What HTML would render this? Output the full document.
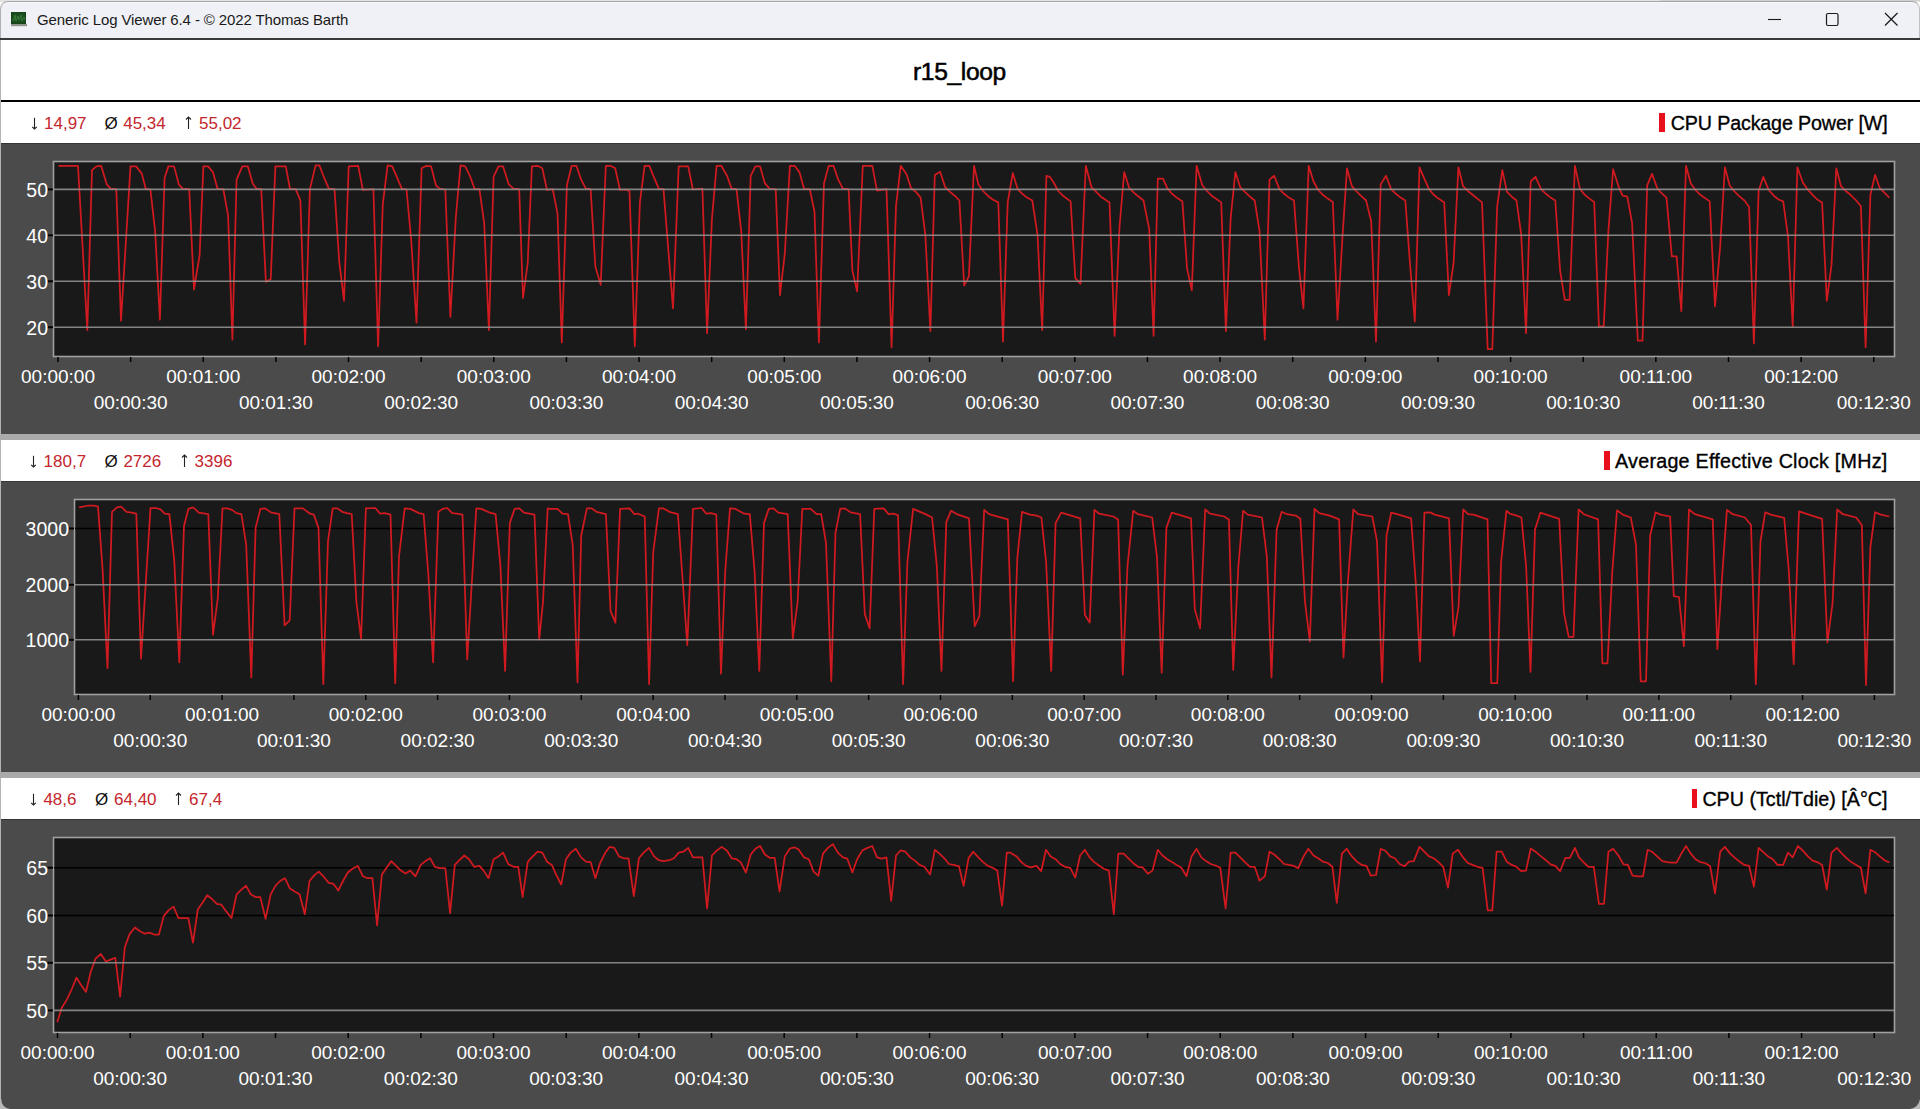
<!DOCTYPE html><html><head><meta charset="utf-8"><style>
*{margin:0;padding:0;box-sizing:border-box}
html,body{width:1920px;height:1109px;overflow:hidden;background:#fff;font-family:"Liberation Sans",sans-serif}
.a{position:absolute}
.t{position:absolute;white-space:nowrap;line-height:1}
.xl{position:absolute;white-space:nowrap;line-height:1;color:#fff;font-size:19px;transform:translateX(-50%)}
.yl{position:absolute;white-space:nowrap;line-height:1;color:#fff;font-size:19.5px;text-align:right;width:60px}
.st{position:absolute;white-space:nowrap;line-height:1;color:#c4262d;font-size:17px}
.lg{position:absolute;white-space:nowrap;line-height:1;color:#000;font-size:19.7px;right:32.5px;-webkit-text-stroke:0.35px #000}
</style></head><body>
<div class="a" style="left:0;top:0;width:1920px;height:2px;background:#e2e2e2"></div>
<div class="a" style="left:1660px;top:0;width:260px;height:1px;background:#d0d0d0"></div>
<div class="a" style="left:0;top:1px;width:1920px;height:38px;background:#eff1f6;border-top:1px solid #a6a6a6;border-left:1px solid #b0b0b0;border-right:1px solid #c0c0c0;border-radius:8px 8px 0 0;box-shadow:inset 0 1px 0 #f8f8fc"></div>
<div class="a" style="left:0;top:38px;width:1920px;height:2px;background:#3a3a3a"></div>
<svg class="a" style="left:10px;top:11px" width="19" height="17" viewBox="0 0 19 17">
<rect x="1" y="1" width="15" height="12" fill="#123a16"/>
<rect x="1.5" y="1.5" width="14" height="11" fill="#1a4d1e"/>
<rect x="1" y="13" width="16" height="2.2" fill="#8e948e"/>
<polyline points="2,9 4,9 5,4 6,10 8,5 9,9 11,4 12,10 14,6 15,9" fill="none" stroke="#3f8a44" stroke-width="0.7"/>
</svg>
<div class="t" style="left:37px;top:12px;font-size:15px;color:#1a1a1a;letter-spacing:-0.12px">Generic Log Viewer 6.4 - © 2022 Thomas Barth</div>
<svg class="a" style="left:1760px;top:8px" width="150" height="24" viewBox="0 0 150 24">
<line x1="8" y1="11.5" x2="21" y2="11.5" stroke="#1a1a1a" stroke-width="1.1"/>
<rect x="66.5" y="5.5" width="11.5" height="12" rx="1.5" fill="none" stroke="#1a1a1a" stroke-width="1.2"/>
<line x1="125" y1="5" x2="137.5" y2="17.5" stroke="#1a1a1a" stroke-width="1.2"/>
<line x1="137.5" y1="5" x2="125" y2="17.5" stroke="#1a1a1a" stroke-width="1.2"/>
</svg>
<div class="a" style="left:0;top:40px;width:1px;height:1069px;background:#b4b4b4"></div>
<div class="t" style="left:913px;top:59.5px;font-size:24.6px;color:#000;-webkit-text-stroke:0.55px #000;letter-spacing:-0.35px">r15_loop</div>
<div class="a" style="left:1px;top:100px;width:1919px;height:2px;background:#000"></div>
<div class="a" style="left:1px;top:143px;width:1919px;height:291px;background:#4b4b4b;border-top:1px solid #363636"></div>
<div class="a" style="left:0;top:434px;width:1920px;height:6px;background:#aaaaaa"></div>
<svg class="a" style="left:30.5px;top:116px" width="7" height="14" viewBox="0 0 7 14"><line x1="3.5" y1="1.8" x2="3.5" y2="13" stroke="#222" stroke-width="1.1"/><polyline points="1.2,10.8 3.5,13 5.8,10.8" fill="none" stroke="#222" stroke-width="1.1"/></svg>
<div class="st" style="left:44px;top:115px">14,97</div>
<div class="t" style="left:104.5px;top:115px;font-size:17px;color:#111">Ø</div>
<div class="st" style="left:123.2px;top:115px">45,34</div>
<svg class="a" style="left:185px;top:116px" width="7" height="13" viewBox="0 0 7 13"><line x1="3.5" y1="1" x2="3.5" y2="13" stroke="#222" stroke-width="1.1"/><polyline points="1,3.5 3.5,1 6,3.5" fill="none" stroke="#222" stroke-width="1.1"/></svg>
<div class="st" style="left:199px;top:115px">55,02</div>
<div class="a" style="left:1659px;top:113px;width:5.5px;height:18.5px;background:#e8101a"></div>
<div class="lg" style="top:114px;letter-spacing:-0.15px">CPU Package Power [W]</div>
<svg class="a" style="left:0;top:143px" width="1920" height="291" viewBox="0 143 1920 291"><rect x="53.5" y="161.5" width="1841" height="195" fill="#191919" stroke="#a0a0a0" stroke-width="1.6"/><line x1="47.5" y1="189.4" x2="53" y2="189.4" stroke="#000" stroke-width="2"/><line x1="47.5" y1="235.3" x2="53" y2="235.3" stroke="#000" stroke-width="2"/><line x1="47.5" y1="281.3" x2="53" y2="281.3" stroke="#000" stroke-width="2"/><line x1="47.5" y1="327.2" x2="53" y2="327.2" stroke="#000" stroke-width="2"/><polyline points="58.5,165.8 78.0,165.8 87.3,330.2 92.0,170.2 96.4,166.4 101.1,165.8 106.8,184.4 110.6,188.7 116.3,189.1 121.0,320.8 130.5,166.4 136.2,166.4 141.9,173.9 145.7,188.7 150.4,189.5 155.1,230.8 159.9,319.8 164.6,177.7 168.4,166.4 174.1,166.4 178.8,184.4 182.6,188.7 189.2,189.1 194.0,289.5 199.6,255.4 203.4,166.4 208.2,166.4 212.9,172.1 217.6,189.1 223.3,189.1 228.1,215.6 232.4,339.7 236.6,179.6 242.3,166.4 247.9,166.4 252.7,183.4 256.5,188.7 261.2,189.1 265.9,281.9 270.7,279.1 275.4,166.4 285.8,166.4 290.0,189.1 295.7,189.1 300.4,200.5 305.1,344.4 309.9,189.1 315.6,165.4 319.4,165.4 324.1,177.7 328.8,188.7 334.5,189.1 339.2,261.1 344.0,300.9 348.7,166.4 358.2,165.8 362.9,190.0 373.4,189.1 378.1,346.3 382.8,204.2 387.6,165.4 392.3,166.4 401.8,188.7 406.5,189.5 411.2,240.2 416.5,322.6 421.6,168.3 426.4,165.8 431.1,166.4 435.9,185.3 439.6,188.7 445.3,189.5 450.4,317.0 455.8,217.5 460.5,165.4 465.2,166.4 469.9,175.8 474.7,189.1 479.4,189.1 484.2,223.2 488.9,330.2 493.6,176.8 498.4,166.4 503.1,166.4 508.8,184.4 513.5,188.7 519.2,189.1 523.0,298.0 527.7,263.0 531.9,166.4 537.6,165.8 542.3,168.3 547.0,190.0 552.7,189.1 557.5,213.7 561.8,342.5 566.9,185.3 571.7,165.8 576.4,165.8 581.1,179.6 585.9,188.7 590.6,189.1 595.4,266.8 600.7,284.8 605.8,165.8 610.5,165.8 615.2,168.3 620.0,190.0 624.7,189.5 629.5,191.0 634.8,346.3 639.9,202.4 644.6,165.8 649.3,165.8 654.1,177.7 658.8,188.7 663.5,189.1 673.0,308.4 678.7,166.4 688.2,166.4 692.9,189.5 702.4,188.7 707.1,333.1 711.9,219.4 716.6,165.8 721.3,165.8 727.0,175.8 731.7,188.7 736.5,189.1 741.2,230.8 745.9,329.3 750.7,175.8 755.4,166.4 760.1,166.4 764.9,183.4 770.0,189.1 775.7,189.1 780.0,295.2 784.8,253.5 789.9,165.8 794.6,165.8 799.4,172.1 804.1,189.1 809.8,189.1 814.5,211.8 818.9,342.5 824.0,183.4 828.7,165.8 833.5,165.8 838.2,179.6 842.9,188.7 848.6,189.1 852.4,270.6 857.1,291.4 862.8,165.8 872.3,165.8 877.0,190.6 886.5,189.1 891.6,347.3 896.0,206.1 900.7,165.8 906.4,173.9 911.1,188.2 915.9,191.9 920.6,197.6 925.3,234.6 930.4,331.2 934.8,174.9 940.1,171.7 945.2,187.2 950.0,191.9 954.7,195.7 959.4,200.5 964.2,285.7 968.9,276.2 974.0,165.8 978.4,184.4 983.1,191.0 987.8,195.7 992.6,199.5 998.3,202.4 1003.0,341.6 1007.7,202.4 1012.8,173.0 1017.6,189.1 1022.3,193.8 1027.0,197.6 1032.3,200.5 1037.5,234.6 1042.2,330.2 1046.4,175.8 1049.8,176.8 1053.6,182.5 1058.3,191.0 1063.0,195.7 1070.6,201.4 1075.3,278.1 1080.5,283.8 1085.8,165.8 1091.5,187.2 1096.2,191.9 1100.9,196.7 1109.5,202.4 1114.6,335.9 1119.5,227.0 1124.2,172.1 1129.3,188.2 1134.1,192.9 1138.8,196.7 1143.5,200.5 1149.2,228.9 1153.6,335.9 1157.8,178.7 1163.0,178.7 1167.2,188.2 1172.0,193.8 1176.7,197.6 1182.4,201.4 1187.1,268.6 1191.8,290.4 1196.6,165.8 1202.3,185.3 1207.0,191.0 1211.7,195.7 1221.2,202.4 1225.9,331.2 1230.7,217.5 1235.4,172.1 1240.2,187.2 1244.9,191.9 1250.0,196.7 1254.7,200.5 1259.5,230.8 1264.8,339.7 1269.5,179.6 1274.2,175.8 1279.4,189.1 1284.1,193.8 1288.8,197.6 1294.0,200.5 1298.9,266.8 1303.4,308.4 1308.7,165.8 1313.5,181.5 1318.2,190.0 1322.9,194.8 1327.7,198.6 1332.8,202.0 1337.5,319.8 1342.4,238.3 1347.0,168.3 1351.9,186.2 1356.1,191.0 1360.8,195.7 1366.1,200.5 1371.2,221.3 1376.0,341.6 1380.7,184.4 1386.0,175.8 1391.1,189.1 1395.9,193.8 1400.6,197.6 1405.3,200.5 1410.1,264.9 1414.8,321.7 1419.5,167.3 1424.3,178.7 1429.0,189.1 1433.7,194.8 1438.5,198.6 1444.2,202.4 1448.9,295.2 1453.6,263.0 1458.4,167.3 1463.1,186.2 1467.8,191.0 1472.6,194.8 1482.0,202.4 1487.7,349.2 1492.3,349.2 1497.2,206.1 1502.3,170.2 1507.0,191.9 1511.8,196.7 1516.5,200.5 1521.2,234.6 1526.0,333.1 1530.7,181.5 1535.5,176.8 1541.1,189.1 1545.9,193.8 1550.6,197.6 1555.3,200.5 1560.1,270.6 1564.8,299.9 1569.6,299.9 1574.9,165.8 1580.0,189.1 1584.7,194.8 1589.5,198.6 1594.2,202.0 1598.9,326.4 1603.7,326.4 1608.4,230.8 1613.1,169.2 1618.8,187.2 1622.6,195.7 1627.3,196.7 1632.1,223.2 1637.8,340.6 1642.5,340.6 1647.2,185.3 1652.0,173.9 1657.6,189.1 1662.4,193.8 1666.5,197.6 1671.8,256.3 1676.6,256.3 1681.3,311.3 1686.0,165.8 1690.8,183.4 1695.5,190.0 1700.3,194.8 1709.7,201.4 1715.0,306.5 1720.2,245.9 1724.9,167.3 1729.6,185.3 1734.0,191.0 1738.7,195.7 1744.4,200.5 1749.1,207.1 1753.9,343.5 1758.6,191.0 1763.3,176.8 1768.7,190.0 1773.8,195.7 1778.5,199.5 1783.2,201.4 1788.0,236.4 1792.7,326.4 1797.4,167.3 1802.8,182.5 1807.3,189.1 1812.6,194.8 1817.3,199.5 1822.1,202.4 1826.8,300.9 1831.5,264.9 1836.3,168.3 1841.0,186.2 1845.8,191.0 1850.5,194.8 1856.2,200.5 1860.9,206.1 1865.6,347.3 1870.4,194.8 1875.1,174.9 1879.8,188.2 1884.6,192.9 1889.3,197.6" fill="none" stroke="#d01a20" stroke-width="1.75" stroke-linejoin="round"/><line x1="54" y1="189.4" x2="1894" y2="189.4" stroke="#909090" stroke-width="1.6" stroke-opacity="0.9"/><line x1="54" y1="235.3" x2="1894" y2="235.3" stroke="#909090" stroke-width="1.6" stroke-opacity="0.9"/><line x1="54" y1="281.3" x2="1894" y2="281.3" stroke="#909090" stroke-width="1.6" stroke-opacity="0.9"/><line x1="54" y1="327.2" x2="1894" y2="327.2" stroke="#909090" stroke-width="1.6" stroke-opacity="0.9"/><line x1="58.00" y1="357" x2="58.00" y2="362" stroke="#000" stroke-width="1.5"/><line x1="130.63" y1="357" x2="130.63" y2="362" stroke="#000" stroke-width="1.5"/><line x1="203.26" y1="357" x2="203.26" y2="362" stroke="#000" stroke-width="1.5"/><line x1="275.89" y1="357" x2="275.89" y2="362" stroke="#000" stroke-width="1.5"/><line x1="348.52" y1="357" x2="348.52" y2="362" stroke="#000" stroke-width="1.5"/><line x1="421.15" y1="357" x2="421.15" y2="362" stroke="#000" stroke-width="1.5"/><line x1="493.78" y1="357" x2="493.78" y2="362" stroke="#000" stroke-width="1.5"/><line x1="566.41" y1="357" x2="566.41" y2="362" stroke="#000" stroke-width="1.5"/><line x1="639.04" y1="357" x2="639.04" y2="362" stroke="#000" stroke-width="1.5"/><line x1="711.67" y1="357" x2="711.67" y2="362" stroke="#000" stroke-width="1.5"/><line x1="784.30" y1="357" x2="784.30" y2="362" stroke="#000" stroke-width="1.5"/><line x1="856.93" y1="357" x2="856.93" y2="362" stroke="#000" stroke-width="1.5"/><line x1="929.56" y1="357" x2="929.56" y2="362" stroke="#000" stroke-width="1.5"/><line x1="1002.19" y1="357" x2="1002.19" y2="362" stroke="#000" stroke-width="1.5"/><line x1="1074.82" y1="357" x2="1074.82" y2="362" stroke="#000" stroke-width="1.5"/><line x1="1147.45" y1="357" x2="1147.45" y2="362" stroke="#000" stroke-width="1.5"/><line x1="1220.08" y1="357" x2="1220.08" y2="362" stroke="#000" stroke-width="1.5"/><line x1="1292.71" y1="357" x2="1292.71" y2="362" stroke="#000" stroke-width="1.5"/><line x1="1365.34" y1="357" x2="1365.34" y2="362" stroke="#000" stroke-width="1.5"/><line x1="1437.97" y1="357" x2="1437.97" y2="362" stroke="#000" stroke-width="1.5"/><line x1="1510.60" y1="357" x2="1510.60" y2="362" stroke="#000" stroke-width="1.5"/><line x1="1583.23" y1="357" x2="1583.23" y2="362" stroke="#000" stroke-width="1.5"/><line x1="1655.86" y1="357" x2="1655.86" y2="362" stroke="#000" stroke-width="1.5"/><line x1="1728.49" y1="357" x2="1728.49" y2="362" stroke="#000" stroke-width="1.5"/><line x1="1801.12" y1="357" x2="1801.12" y2="362" stroke="#000" stroke-width="1.5"/><line x1="1873.75" y1="357" x2="1873.75" y2="362" stroke="#000" stroke-width="1.5"/></svg>
<div class="yl" style="left:-12px;top:180.9px">50</div>
<div class="yl" style="left:-12px;top:226.8px">40</div>
<div class="yl" style="left:-12px;top:272.8px">30</div>
<div class="yl" style="left:-12px;top:318.7px">20</div>
<div class="xl" style="left:58.00px;top:367px">00:00:00</div>
<div class="xl" style="left:130.63px;top:393px">00:00:30</div>
<div class="xl" style="left:203.26px;top:367px">00:01:00</div>
<div class="xl" style="left:275.89px;top:393px">00:01:30</div>
<div class="xl" style="left:348.52px;top:367px">00:02:00</div>
<div class="xl" style="left:421.15px;top:393px">00:02:30</div>
<div class="xl" style="left:493.78px;top:367px">00:03:00</div>
<div class="xl" style="left:566.41px;top:393px">00:03:30</div>
<div class="xl" style="left:639.04px;top:367px">00:04:00</div>
<div class="xl" style="left:711.67px;top:393px">00:04:30</div>
<div class="xl" style="left:784.30px;top:367px">00:05:00</div>
<div class="xl" style="left:856.93px;top:393px">00:05:30</div>
<div class="xl" style="left:929.56px;top:367px">00:06:00</div>
<div class="xl" style="left:1002.19px;top:393px">00:06:30</div>
<div class="xl" style="left:1074.82px;top:367px">00:07:00</div>
<div class="xl" style="left:1147.45px;top:393px">00:07:30</div>
<div class="xl" style="left:1220.08px;top:367px">00:08:00</div>
<div class="xl" style="left:1292.71px;top:393px">00:08:30</div>
<div class="xl" style="left:1365.34px;top:367px">00:09:00</div>
<div class="xl" style="left:1437.97px;top:393px">00:09:30</div>
<div class="xl" style="left:1510.60px;top:367px">00:10:00</div>
<div class="xl" style="left:1583.23px;top:393px">00:10:30</div>
<div class="xl" style="left:1655.86px;top:367px">00:11:00</div>
<div class="xl" style="left:1728.49px;top:393px">00:11:30</div>
<div class="xl" style="left:1801.12px;top:367px">00:12:00</div>
<div class="xl" style="left:1873.75px;top:393px">00:12:30</div>
<div class="a" style="left:1px;top:481px;width:1919px;height:291px;background:#4b4b4b;border-top:1px solid #363636"></div>
<div class="a" style="left:0;top:772px;width:1920px;height:6px;background:#aaaaaa"></div>
<svg class="a" style="left:30px;top:454px" width="7" height="14" viewBox="0 0 7 14"><line x1="3.5" y1="1.8" x2="3.5" y2="13" stroke="#222" stroke-width="1.1"/><polyline points="1.2,10.8 3.5,13 5.8,10.8" fill="none" stroke="#222" stroke-width="1.1"/></svg>
<div class="st" style="left:43.6px;top:453px">180,7</div>
<div class="t" style="left:104.5px;top:453px;font-size:17px;color:#111">Ø</div>
<div class="st" style="left:123.4px;top:453px">2726</div>
<svg class="a" style="left:181px;top:454px" width="7" height="13" viewBox="0 0 7 13"><line x1="3.5" y1="1" x2="3.5" y2="13" stroke="#222" stroke-width="1.1"/><polyline points="1,3.5 3.5,1 6,3.5" fill="none" stroke="#222" stroke-width="1.1"/></svg>
<div class="st" style="left:194.6px;top:453px">3396</div>
<div class="a" style="left:1604px;top:451px;width:5.5px;height:18.5px;background:#e8101a"></div>
<div class="lg" style="top:452px;letter-spacing:0.25px">Average Effective Clock [MHz]</div>
<svg class="a" style="left:0;top:481px" width="1920" height="291" viewBox="0 481 1920 291"><rect x="74.5" y="499.5" width="1820" height="195" fill="#191919" stroke="#a0a0a0" stroke-width="1.6"/><line x1="75" y1="528.5" x2="1894" y2="528.5" stroke="#000" stroke-width="1.6"/><line x1="68.5" y1="528.5" x2="74" y2="528.5" stroke="#000" stroke-width="2"/><line x1="68.5" y1="584.8" x2="74" y2="584.8" stroke="#000" stroke-width="2"/><line x1="68.5" y1="639.8" x2="74" y2="639.8" stroke="#000" stroke-width="2"/><polyline points="79.1,507.4 88.9,505.5 93.7,505.5 98.0,506.7 102.6,569.6 107.5,668.1 112.0,511.8 117.0,507.4 121.1,506.7 126.5,511.8 131.6,512.7 136.3,513.7 141.0,658.6 150.5,508.0 156.2,508.0 160.5,509.3 164.7,513.7 169.4,514.1 174.2,560.1 179.3,662.4 184.0,526.0 188.4,508.9 193.1,507.4 198.8,512.7 208.3,514.1 213.0,634.9 217.8,598.0 222.5,508.4 227.2,508.4 232.0,509.9 236.3,513.1 241.4,514.1 246.2,544.9 251.3,677.5 255.6,527.9 260.4,508.9 265.1,508.4 270.8,512.4 279.3,514.1 284.6,625.4 289.7,620.3 294.5,508.4 303.0,508.4 310.0,513.7 313.8,514.6 318.5,527.9 323.3,684.2 328.0,541.1 332.7,508.4 337.5,508.4 342.2,511.8 346.9,513.1 351.7,514.1 356.4,601.8 361.1,638.7 365.9,508.4 375.4,508.0 380.1,513.7 384.8,513.1 390.5,514.6 395.2,683.2 399.0,556.3 404.7,508.4 410.4,508.9 418.9,513.1 423.6,514.1 428.4,575.2 433.1,662.4 438.4,511.8 442.6,508.9 447.3,508.0 452.1,513.1 456.8,513.7 462.5,514.6 467.2,659.5 476.3,508.4 481.4,508.9 489.9,512.7 495.6,514.1 500.4,565.8 505.1,670.9 509.8,523.1 514.6,508.9 519.3,508.4 524.0,512.7 534.5,514.6 539.2,639.6 543.0,601.8 547.7,508.4 550.0,508.9 557.6,508.9 562.3,513.7 568.0,514.1 572.7,544.9 577.5,682.3 581.2,535.5 586.9,508.4 591.7,508.4 596.4,511.8 605.9,514.1 610.6,611.2 615.4,622.6 620.1,508.9 629.6,508.4 634.3,514.1 638.1,513.7 644.7,516.5 649.1,684.2 653.2,552.5 658.9,508.4 663.6,508.4 669.3,511.8 677.9,514.1 687.3,645.3 693.0,508.9 701.5,508.0 706.3,513.7 711.0,513.1 716.3,514.6 721.0,673.7 725.2,571.5 730.0,508.4 735.6,508.9 744.2,513.7 749.8,514.1 754.6,571.5 759.3,670.9 764.0,523.1 768.8,508.9 773.5,508.4 778.3,512.7 787.7,514.1 792.8,638.7 797.6,601.8 802.3,508.9 810.8,508.9 816.5,514.1 821.2,514.1 826.0,543.0 831.3,681.3 835.5,532.6 840.2,508.9 844.9,508.4 850.6,512.4 860.1,514.1 864.8,614.1 869.6,628.3 874.3,508.9 883.8,508.4 888.5,514.1 893.2,513.7 898.0,515.2 903.1,684.2 907.4,562.0 913.1,508.9 925.4,514.1 932.1,517.5 936.8,565.8 941.5,670.9 946.3,522.2 951.0,510.8 956.7,514.1 969.0,518.4 974.7,626.4 979.4,616.0 984.2,509.9 988.9,514.1 1007.8,519.4 1013.1,681.3 1017.3,558.2 1022.0,511.8 1030.0,514.6 1036.6,515.6 1041.4,517.5 1046.1,562.0 1051.2,670.9 1055.6,523.1 1061.2,512.7 1080.2,518.4 1084.9,615.0 1089.7,622.6 1094.4,509.9 1099.1,513.7 1113.3,516.5 1118.1,519.4 1122.8,674.7 1127.5,565.8 1133.2,510.8 1138.0,514.2 1152.2,517.5 1156.9,556.3 1161.7,672.8 1166.4,527.9 1171.7,512.7 1176.8,514.1 1191.0,518.4 1194.8,609.3 1200.1,628.3 1205.2,509.5 1210.0,513.7 1224.2,516.5 1228.9,519.4 1233.2,670.0 1238.4,565.8 1243.1,510.8 1247.8,514.6 1262.0,517.5 1266.8,556.3 1271.5,677.5 1276.6,529.8 1281.7,511.8 1287.0,514.2 1295.6,515.6 1300.3,518.4 1305.0,601.8 1309.8,641.5 1314.5,508.9 1319.2,513.1 1329.7,515.6 1339.1,519.4 1343.5,657.6 1347.7,584.7 1353.3,509.5 1358.1,514.1 1372.3,516.5 1377.0,541.1 1382.1,682.3 1386.5,535.5 1391.2,512.7 1396.9,514.1 1411.1,518.4 1415.9,584.7 1420.0,661.4 1424.4,512.7 1430.1,512.4 1434.8,514.6 1449.0,518.4 1453.7,635.9 1458.5,607.4 1463.2,509.5 1468.0,514.1 1473.6,514.6 1487.5,519.4 1491.2,683.2 1497.3,683.2 1501.1,562.0 1506.4,510.8 1510.0,513.7 1516.6,515.6 1521.4,517.5 1526.1,565.8 1530.5,671.9 1535.0,529.8 1540.3,512.7 1559.2,518.8 1564.0,613.1 1568.7,636.8 1573.5,636.8 1578.6,509.5 1583.9,514.2 1598.1,519.4 1602.4,663.3 1607.5,663.3 1612.3,571.5 1617.0,510.3 1622.7,514.6 1630.8,517.5 1636.0,544.9 1640.7,681.3 1646.0,681.3 1650.2,535.5 1655.5,512.4 1660.6,514.6 1670.1,516.5 1673.8,596.1 1679.0,597.0 1683.9,646.3 1689.0,509.5 1694.7,514.1 1712.7,519.4 1717.4,649.1 1722.2,575.2 1726.9,509.9 1732.6,514.2 1744.9,517.5 1751.0,525.0 1755.8,684.2 1760.5,541.1 1765.2,512.4 1770.9,514.6 1784.2,517.9 1788.9,571.5 1793.7,664.3 1799.0,511.4 1808.8,514.6 1822.1,518.8 1827.4,642.5 1832.5,603.6 1837.2,509.5 1842.9,514.2 1856.2,517.5 1861.8,525.0 1866.0,685.1 1870.4,546.8 1875.1,512.2 1880.8,514.6 1889.3,516.5" fill="none" stroke="#d01a20" stroke-width="1.75" stroke-linejoin="round"/><line x1="75" y1="584.8" x2="1894" y2="584.8" stroke="#909090" stroke-width="1.6" stroke-opacity="0.9"/><line x1="75" y1="639.8" x2="1894" y2="639.8" stroke="#909090" stroke-width="1.6" stroke-opacity="0.9"/><line x1="78.40" y1="695" x2="78.40" y2="700" stroke="#000" stroke-width="1.5"/><line x1="150.24" y1="695" x2="150.24" y2="700" stroke="#000" stroke-width="1.5"/><line x1="222.08" y1="695" x2="222.08" y2="700" stroke="#000" stroke-width="1.5"/><line x1="293.92" y1="695" x2="293.92" y2="700" stroke="#000" stroke-width="1.5"/><line x1="365.76" y1="695" x2="365.76" y2="700" stroke="#000" stroke-width="1.5"/><line x1="437.60" y1="695" x2="437.60" y2="700" stroke="#000" stroke-width="1.5"/><line x1="509.44" y1="695" x2="509.44" y2="700" stroke="#000" stroke-width="1.5"/><line x1="581.28" y1="695" x2="581.28" y2="700" stroke="#000" stroke-width="1.5"/><line x1="653.12" y1="695" x2="653.12" y2="700" stroke="#000" stroke-width="1.5"/><line x1="724.96" y1="695" x2="724.96" y2="700" stroke="#000" stroke-width="1.5"/><line x1="796.80" y1="695" x2="796.80" y2="700" stroke="#000" stroke-width="1.5"/><line x1="868.64" y1="695" x2="868.64" y2="700" stroke="#000" stroke-width="1.5"/><line x1="940.48" y1="695" x2="940.48" y2="700" stroke="#000" stroke-width="1.5"/><line x1="1012.32" y1="695" x2="1012.32" y2="700" stroke="#000" stroke-width="1.5"/><line x1="1084.16" y1="695" x2="1084.16" y2="700" stroke="#000" stroke-width="1.5"/><line x1="1156.00" y1="695" x2="1156.00" y2="700" stroke="#000" stroke-width="1.5"/><line x1="1227.84" y1="695" x2="1227.84" y2="700" stroke="#000" stroke-width="1.5"/><line x1="1299.68" y1="695" x2="1299.68" y2="700" stroke="#000" stroke-width="1.5"/><line x1="1371.52" y1="695" x2="1371.52" y2="700" stroke="#000" stroke-width="1.5"/><line x1="1443.36" y1="695" x2="1443.36" y2="700" stroke="#000" stroke-width="1.5"/><line x1="1515.20" y1="695" x2="1515.20" y2="700" stroke="#000" stroke-width="1.5"/><line x1="1587.04" y1="695" x2="1587.04" y2="700" stroke="#000" stroke-width="1.5"/><line x1="1658.88" y1="695" x2="1658.88" y2="700" stroke="#000" stroke-width="1.5"/><line x1="1730.72" y1="695" x2="1730.72" y2="700" stroke="#000" stroke-width="1.5"/><line x1="1802.56" y1="695" x2="1802.56" y2="700" stroke="#000" stroke-width="1.5"/><line x1="1874.40" y1="695" x2="1874.40" y2="700" stroke="#000" stroke-width="1.5"/></svg>
<div class="yl" style="left:9px;top:520.0px">3000</div>
<div class="yl" style="left:9px;top:576.3px">2000</div>
<div class="yl" style="left:9px;top:631.3px">1000</div>
<div class="xl" style="left:78.40px;top:705px">00:00:00</div>
<div class="xl" style="left:150.24px;top:731px">00:00:30</div>
<div class="xl" style="left:222.08px;top:705px">00:01:00</div>
<div class="xl" style="left:293.92px;top:731px">00:01:30</div>
<div class="xl" style="left:365.76px;top:705px">00:02:00</div>
<div class="xl" style="left:437.60px;top:731px">00:02:30</div>
<div class="xl" style="left:509.44px;top:705px">00:03:00</div>
<div class="xl" style="left:581.28px;top:731px">00:03:30</div>
<div class="xl" style="left:653.12px;top:705px">00:04:00</div>
<div class="xl" style="left:724.96px;top:731px">00:04:30</div>
<div class="xl" style="left:796.80px;top:705px">00:05:00</div>
<div class="xl" style="left:868.64px;top:731px">00:05:30</div>
<div class="xl" style="left:940.48px;top:705px">00:06:00</div>
<div class="xl" style="left:1012.32px;top:731px">00:06:30</div>
<div class="xl" style="left:1084.16px;top:705px">00:07:00</div>
<div class="xl" style="left:1156.00px;top:731px">00:07:30</div>
<div class="xl" style="left:1227.84px;top:705px">00:08:00</div>
<div class="xl" style="left:1299.68px;top:731px">00:08:30</div>
<div class="xl" style="left:1371.52px;top:705px">00:09:00</div>
<div class="xl" style="left:1443.36px;top:731px">00:09:30</div>
<div class="xl" style="left:1515.20px;top:705px">00:10:00</div>
<div class="xl" style="left:1587.04px;top:731px">00:10:30</div>
<div class="xl" style="left:1658.88px;top:705px">00:11:00</div>
<div class="xl" style="left:1730.72px;top:731px">00:11:30</div>
<div class="xl" style="left:1802.56px;top:705px">00:12:00</div>
<div class="xl" style="left:1874.40px;top:731px">00:12:30</div>
<div class="a" style="left:1px;top:819px;width:1919px;height:291px;background:#4b4b4b;border-top:1px solid #363636"></div>
<svg class="a" style="left:30px;top:792px" width="7" height="14" viewBox="0 0 7 14"><line x1="3.5" y1="1.8" x2="3.5" y2="13" stroke="#222" stroke-width="1.1"/><polyline points="1.2,10.8 3.5,13 5.8,10.8" fill="none" stroke="#222" stroke-width="1.1"/></svg>
<div class="st" style="left:43.4px;top:791px">48,6</div>
<div class="t" style="left:95px;top:791px;font-size:17px;color:#111">Ø</div>
<div class="st" style="left:114px;top:791px">64,40</div>
<svg class="a" style="left:175.3px;top:792px" width="7" height="13" viewBox="0 0 7 13"><line x1="3.5" y1="1" x2="3.5" y2="13" stroke="#222" stroke-width="1.1"/><polyline points="1,3.5 3.5,1 6,3.5" fill="none" stroke="#222" stroke-width="1.1"/></svg>
<div class="st" style="left:189px;top:791px">67,4</div>
<div class="a" style="left:1691.5px;top:789px;width:5.5px;height:18.5px;background:#e8101a"></div>
<div class="lg" style="top:790px;letter-spacing:0px">CPU (Tctl/Tdie) [Â°C]</div>
<svg class="a" style="left:0;top:819px" width="1920" height="291" viewBox="0 819 1920 291"><rect x="53.5" y="837.5" width="1841" height="195" fill="#191919" stroke="#a0a0a0" stroke-width="1.6"/><line x1="54" y1="867.7" x2="1894" y2="867.7" stroke="#000" stroke-width="1.6"/><line x1="47.5" y1="867.7" x2="53" y2="867.7" stroke="#000" stroke-width="2"/><line x1="54" y1="915.5" x2="1894" y2="915.5" stroke="#000" stroke-width="1.6"/><line x1="47.5" y1="915.5" x2="53" y2="915.5" stroke="#000" stroke-width="2"/><line x1="47.5" y1="962.8" x2="53" y2="962.8" stroke="#000" stroke-width="2"/><line x1="47.5" y1="1010.4" x2="53" y2="1010.4" stroke="#000" stroke-width="2"/><polyline points="57.2,1022.2 61.7,1008.0 67.0,999.4 71.8,989.0 76.5,977.6 81.2,985.2 86.0,991.9 90.7,972.0 95.5,958.7 100.8,954.0 105.9,961.5 110.6,959.6 115.3,957.8 120.1,996.6 124.8,947.3 129.6,934.1 134.9,927.5 140.0,931.2 144.7,933.7 149.4,932.6 154.2,934.5 158.9,934.5 163.7,916.1 168.4,910.4 173.5,906.6 178.4,918.0 188.3,918.0 193.0,942.6 197.8,909.5 202.5,902.8 207.2,895.2 212.0,899.0 216.7,903.8 221.4,904.7 226.2,911.4 231.5,918.0 236.6,894.3 241.3,889.6 246.1,885.8 250.8,894.3 255.5,897.1 260.3,897.1 265.6,918.9 270.7,894.3 275.4,885.8 280.1,881.0 284.9,878.2 290.0,888.6 294.7,891.5 299.5,894.3 304.8,914.2 309.5,881.0 314.2,875.4 318.8,871.6 324.1,877.2 328.8,882.9 333.6,883.9 338.3,890.5 343.0,881.0 347.8,872.5 352.5,868.7 357.8,865.9 362.9,876.3 367.7,878.2 372.4,878.2 377.1,925.5 381.9,874.4 386.6,867.8 391.3,861.1 396.1,865.9 400.8,870.6 405.6,873.5 410.3,870.6 415.4,876.3 420.7,864.9 425.4,861.1 430.2,858.3 434.9,866.8 439.6,868.2 445.3,868.2 450.1,913.2 454.8,864.9 459.5,860.2 464.3,855.5 469.0,859.2 474.1,866.8 479.4,865.9 483.6,870.6 488.5,878.2 493.6,859.2 498.4,856.4 503.1,852.6 508.2,864.0 513.5,866.8 518.3,866.8 522.6,897.1 527.7,862.1 530.0,859.2 537.6,851.7 542.3,852.6 547.0,861.7 551.8,864.9 556.5,875.4 561.2,884.5 566.0,859.2 570.7,852.6 575.8,848.8 581.1,857.4 585.9,861.7 590.6,862.1 595.4,878.2 600.1,863.0 605.4,852.6 609.6,846.9 614.3,847.9 619.0,856.4 623.8,858.3 628.5,858.3 633.8,896.2 638.9,858.3 643.6,852.6 649.0,847.9 654.1,856.4 658.8,860.2 663.5,861.1 669.2,860.2 674.0,858.3 678.7,852.6 683.4,851.7 688.2,847.9 692.9,857.4 697.6,857.4 702.4,857.4 707.1,908.5 711.9,855.5 716.6,850.7 721.7,846.9 727.0,850.7 731.7,858.3 736.5,859.2 740.6,862.1 745.9,872.5 750.7,854.5 755.4,848.8 760.1,846.0 764.9,854.5 770.0,857.9 774.7,857.9 779.5,891.5 784.8,856.4 789.9,848.5 794.2,847.3 798.4,849.2 804.1,857.4 808.8,859.2 813.6,871.6 818.3,875.7 823.0,853.6 827.8,847.9 832.9,844.1 837.8,852.6 842.9,857.4 847.3,858.7 852.4,872.5 857.1,859.2 862.4,850.4 867.5,847.9 872.3,846.0 877.0,857.4 881.8,858.7 886.5,857.4 891.2,900.9 896.0,855.5 900.7,850.4 905.4,851.7 910.2,857.4 914.9,860.6 919.6,864.9 924.4,866.8 930.1,874.4 934.8,849.8 939.5,853.6 944.3,858.3 949.0,864.0 953.7,864.9 959.0,866.3 963.6,885.8 968.5,858.3 973.1,851.7 978.4,857.4 983.1,862.1 987.8,865.9 992.6,867.8 997.3,870.6 1002.0,905.7 1006.8,852.6 1010.0,852.6 1016.6,856.4 1021.4,862.1 1026.1,865.9 1030.8,867.4 1036.5,865.9 1041.2,871.2 1046.0,849.8 1050.7,856.4 1055.5,859.2 1060.2,864.0 1064.9,866.8 1070.2,867.8 1075.3,877.6 1080.1,855.5 1084.8,849.8 1089.6,857.4 1094.3,862.1 1099.0,865.5 1103.8,868.7 1108.9,870.6 1113.8,914.2 1118.3,853.6 1123.7,853.6 1128.4,858.3 1133.1,863.0 1137.9,866.8 1142.6,867.4 1147.9,873.8 1152.5,870.6 1157.8,849.8 1162.5,855.5 1167.2,859.2 1172.0,862.1 1176.7,864.9 1181.4,867.8 1186.5,876.3 1191.5,856.4 1196.6,848.8 1201.3,857.4 1206.0,861.1 1210.8,864.0 1215.5,865.5 1220.3,867.8 1225.6,908.5 1230.7,852.6 1235.4,852.6 1240.2,857.4 1244.9,862.1 1250.0,866.8 1254.7,866.8 1259.5,880.7 1264.8,876.3 1269.5,851.7 1274.2,854.5 1279.4,859.2 1284.1,864.0 1288.8,864.9 1293.6,865.9 1298.3,868.2 1303.0,857.4 1308.3,848.8 1313.5,855.5 1318.2,858.3 1322.9,861.7 1327.7,863.0 1332.4,866.8 1336.8,902.8 1341.9,853.6 1346.6,848.8 1351.9,856.4 1357.0,861.7 1361.8,864.9 1366.5,865.9 1370.8,875.7 1376.0,875.0 1380.7,848.8 1385.4,850.7 1390.2,856.4 1394.9,858.3 1399.6,864.0 1404.4,866.3 1409.1,861.7 1413.8,861.1 1419.5,846.9 1424.3,851.7 1429.0,856.4 1433.7,858.3 1438.5,862.1 1443.2,866.8 1448.0,887.7 1452.7,853.6 1458.0,849.8 1463.1,857.4 1467.8,863.0 1472.6,864.9 1477.3,866.8 1482.6,867.8 1487.7,910.4 1492.3,910.4 1496.6,851.7 1501.7,851.7 1507.0,862.1 1511.8,864.9 1516.5,866.8 1521.2,871.2 1526.0,870.6 1530.7,848.5 1535.5,851.7 1541.1,856.4 1545.9,860.2 1550.6,864.4 1555.3,865.9 1560.1,871.2 1565.4,857.9 1569.9,857.9 1574.9,847.9 1579.0,857.4 1584.3,863.0 1588.5,866.8 1593.8,866.8 1598.9,903.8 1604.0,903.8 1608.4,851.7 1613.1,848.8 1618.4,855.5 1623.5,864.4 1627.9,864.9 1632.5,875.7 1637.8,876.3 1643.0,876.3 1647.6,849.8 1652.0,851.7 1657.6,856.8 1662.4,861.1 1667.1,862.1 1671.8,862.7 1676.6,862.7 1681.3,853.6 1686.0,846.0 1690.8,853.6 1695.5,859.2 1700.3,862.1 1705.0,863.0 1710.1,865.9 1715.0,893.4 1720.2,851.7 1724.9,846.9 1730.2,853.6 1734.9,857.9 1740.2,862.1 1744.4,864.9 1749.1,865.9 1753.9,886.7 1758.6,847.9 1763.3,852.2 1768.1,856.4 1772.8,859.2 1777.5,864.9 1783.2,864.9 1788.0,852.6 1792.7,857.4 1797.8,846.0 1802.8,850.7 1807.9,856.4 1812.6,860.6 1817.3,862.1 1822.1,864.9 1826.8,889.6 1831.5,852.6 1836.8,847.9 1842.0,853.6 1846.7,858.3 1851.4,862.1 1856.2,864.9 1860.9,867.8 1865.6,893.4 1870.4,849.8 1875.1,852.2 1879.8,856.4 1884.6,860.2 1889.3,862.5" fill="none" stroke="#d01a20" stroke-width="1.75" stroke-linejoin="round"/><line x1="54" y1="962.8" x2="1894" y2="962.8" stroke="#909090" stroke-width="1.6" stroke-opacity="0.9"/><line x1="54" y1="1010.4" x2="1894" y2="1010.4" stroke="#909090" stroke-width="1.6" stroke-opacity="0.9"/><line x1="57.50" y1="1033" x2="57.50" y2="1038" stroke="#000" stroke-width="1.5"/><line x1="130.17" y1="1033" x2="130.17" y2="1038" stroke="#000" stroke-width="1.5"/><line x1="202.84" y1="1033" x2="202.84" y2="1038" stroke="#000" stroke-width="1.5"/><line x1="275.51" y1="1033" x2="275.51" y2="1038" stroke="#000" stroke-width="1.5"/><line x1="348.18" y1="1033" x2="348.18" y2="1038" stroke="#000" stroke-width="1.5"/><line x1="420.85" y1="1033" x2="420.85" y2="1038" stroke="#000" stroke-width="1.5"/><line x1="493.52" y1="1033" x2="493.52" y2="1038" stroke="#000" stroke-width="1.5"/><line x1="566.19" y1="1033" x2="566.19" y2="1038" stroke="#000" stroke-width="1.5"/><line x1="638.86" y1="1033" x2="638.86" y2="1038" stroke="#000" stroke-width="1.5"/><line x1="711.53" y1="1033" x2="711.53" y2="1038" stroke="#000" stroke-width="1.5"/><line x1="784.20" y1="1033" x2="784.20" y2="1038" stroke="#000" stroke-width="1.5"/><line x1="856.87" y1="1033" x2="856.87" y2="1038" stroke="#000" stroke-width="1.5"/><line x1="929.54" y1="1033" x2="929.54" y2="1038" stroke="#000" stroke-width="1.5"/><line x1="1002.21" y1="1033" x2="1002.21" y2="1038" stroke="#000" stroke-width="1.5"/><line x1="1074.88" y1="1033" x2="1074.88" y2="1038" stroke="#000" stroke-width="1.5"/><line x1="1147.55" y1="1033" x2="1147.55" y2="1038" stroke="#000" stroke-width="1.5"/><line x1="1220.22" y1="1033" x2="1220.22" y2="1038" stroke="#000" stroke-width="1.5"/><line x1="1292.89" y1="1033" x2="1292.89" y2="1038" stroke="#000" stroke-width="1.5"/><line x1="1365.56" y1="1033" x2="1365.56" y2="1038" stroke="#000" stroke-width="1.5"/><line x1="1438.23" y1="1033" x2="1438.23" y2="1038" stroke="#000" stroke-width="1.5"/><line x1="1510.90" y1="1033" x2="1510.90" y2="1038" stroke="#000" stroke-width="1.5"/><line x1="1583.57" y1="1033" x2="1583.57" y2="1038" stroke="#000" stroke-width="1.5"/><line x1="1656.24" y1="1033" x2="1656.24" y2="1038" stroke="#000" stroke-width="1.5"/><line x1="1728.91" y1="1033" x2="1728.91" y2="1038" stroke="#000" stroke-width="1.5"/><line x1="1801.58" y1="1033" x2="1801.58" y2="1038" stroke="#000" stroke-width="1.5"/><line x1="1874.25" y1="1033" x2="1874.25" y2="1038" stroke="#000" stroke-width="1.5"/></svg>
<div class="yl" style="left:-12px;top:859.2px">65</div>
<div class="yl" style="left:-12px;top:907.0px">60</div>
<div class="yl" style="left:-12px;top:954.3px">55</div>
<div class="yl" style="left:-12px;top:1001.9px">50</div>
<div class="xl" style="left:57.50px;top:1043px">00:00:00</div>
<div class="xl" style="left:130.17px;top:1069px">00:00:30</div>
<div class="xl" style="left:202.84px;top:1043px">00:01:00</div>
<div class="xl" style="left:275.51px;top:1069px">00:01:30</div>
<div class="xl" style="left:348.18px;top:1043px">00:02:00</div>
<div class="xl" style="left:420.85px;top:1069px">00:02:30</div>
<div class="xl" style="left:493.52px;top:1043px">00:03:00</div>
<div class="xl" style="left:566.19px;top:1069px">00:03:30</div>
<div class="xl" style="left:638.86px;top:1043px">00:04:00</div>
<div class="xl" style="left:711.53px;top:1069px">00:04:30</div>
<div class="xl" style="left:784.20px;top:1043px">00:05:00</div>
<div class="xl" style="left:856.87px;top:1069px">00:05:30</div>
<div class="xl" style="left:929.54px;top:1043px">00:06:00</div>
<div class="xl" style="left:1002.21px;top:1069px">00:06:30</div>
<div class="xl" style="left:1074.88px;top:1043px">00:07:00</div>
<div class="xl" style="left:1147.55px;top:1069px">00:07:30</div>
<div class="xl" style="left:1220.22px;top:1043px">00:08:00</div>
<div class="xl" style="left:1292.89px;top:1069px">00:08:30</div>
<div class="xl" style="left:1365.56px;top:1043px">00:09:00</div>
<div class="xl" style="left:1438.23px;top:1069px">00:09:30</div>
<div class="xl" style="left:1510.90px;top:1043px">00:10:00</div>
<div class="xl" style="left:1583.57px;top:1069px">00:10:30</div>
<div class="xl" style="left:1656.24px;top:1043px">00:11:00</div>
<div class="xl" style="left:1728.91px;top:1069px">00:11:30</div>
<div class="xl" style="left:1801.58px;top:1043px">00:12:00</div>
<div class="xl" style="left:1874.25px;top:1069px">00:12:30</div>
<svg class="a" style="left:0;top:1099px" width="10" height="10" viewBox="0 0 10 10"><path d="M0,0 L1.2,0 Q1.5,8.5 10,10 L0,10 Z" fill="#b9b9b9"/></svg>
<svg class="a" style="left:1910px;top:1099px" width="10" height="10" viewBox="0 0 10 10"><path d="M10,0 L10,10 L0,10 Q8.5,8.5 10,0 Z" fill="#b9b9b9"/></svg>
</body></html>
